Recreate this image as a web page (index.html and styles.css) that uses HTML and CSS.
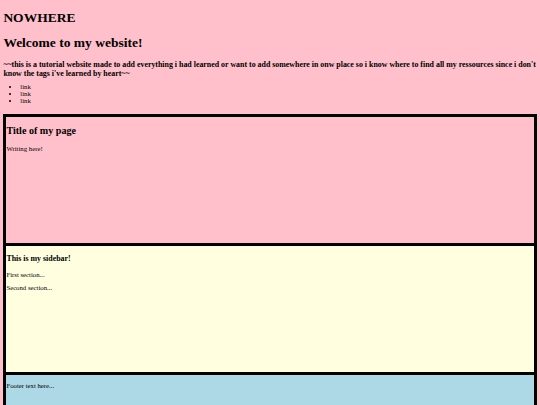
FILE: index.html
```html
<!DOCTYPE html>
<html lang="en">
<head>
<meta charset="utf-8">
<title>NOWHERE</title>
<link rel="stylesheet" href="styles.css">
</head>
<body>
<header class="site-header">
  <h1 class="site-name">NOWHERE</h1>
</header>
<h1 class="welcome">Welcome to my website!</h1>
<h3 class="tagline">~~this is a tutorial website made to add everything i had learned or want to add somewhere in onw place so i know where to find all my ressources since i don't know the tags i've learned by heart~~</h3>
<ul class="nav">
  <li><a class="nav-link" href="#">link</a></li>
  <li><a class="nav-link" href="#">link</a></li>
  <li><a class="nav-link" href="#">link</a></li>
</ul>
<div class="layout">
  <main class="panel panel-main">
    <h2 class="panel-title">Title of my page</h2>
    <p class="text">Writing here!</p>
  </main>
  <aside class="panel panel-side">
    <h3 class="side-title">This is my sidebar!</h3>
    <p class="text">First section...</p>
    <p class="text">Second section...</p>
  </aside>
  <footer class="panel panel-footer">
    <p class="text">Footer text here...</p>
  </footer>
</div>
</body>
</html>
```

FILE: styles.css
```css
html {
  background: #ffc0cb;
}

body {
  margin: 3.375px;
  background: #ffc0cb;
  color: #000;
  font-family: "Liberation Serif", "Times New Roman", serif;
  font-size: 6.75px;
}

.site-name,
.welcome {
  font-size: 13.5px;
  margin: 9px 0;
}

.site-name {
  margin-top: 7px;
}

.tagline {
  font-size: 7.9px;
  margin: 7.9px 0 5px;
}

.nav {
  margin: 5px 0 9.5px;
  padding-left: 16.9px;
}

.nav-link {
  color: inherit;
  text-decoration: none;
}

.layout {
  display: flex;
  flex-direction: column;
}

.panel {
  border: 3px solid #000;
  border-bottom: none;
  min-height: 126px;
  display: flow-root;
}

.panel-main {
  background: #ffc0cb;
}

.panel-side {
  background: #ffffe0;
}

.panel-footer {
  background: #add8e6;
  border-bottom: 3px solid #000;
}

.panel-title {
  font-size: 10.1px;
  margin: 8.4px 0;
}

.side-title {
  font-size: 7.9px;
  margin: 7.9px 0;
}

.text {
  margin: 6.75px 0;
}
```
